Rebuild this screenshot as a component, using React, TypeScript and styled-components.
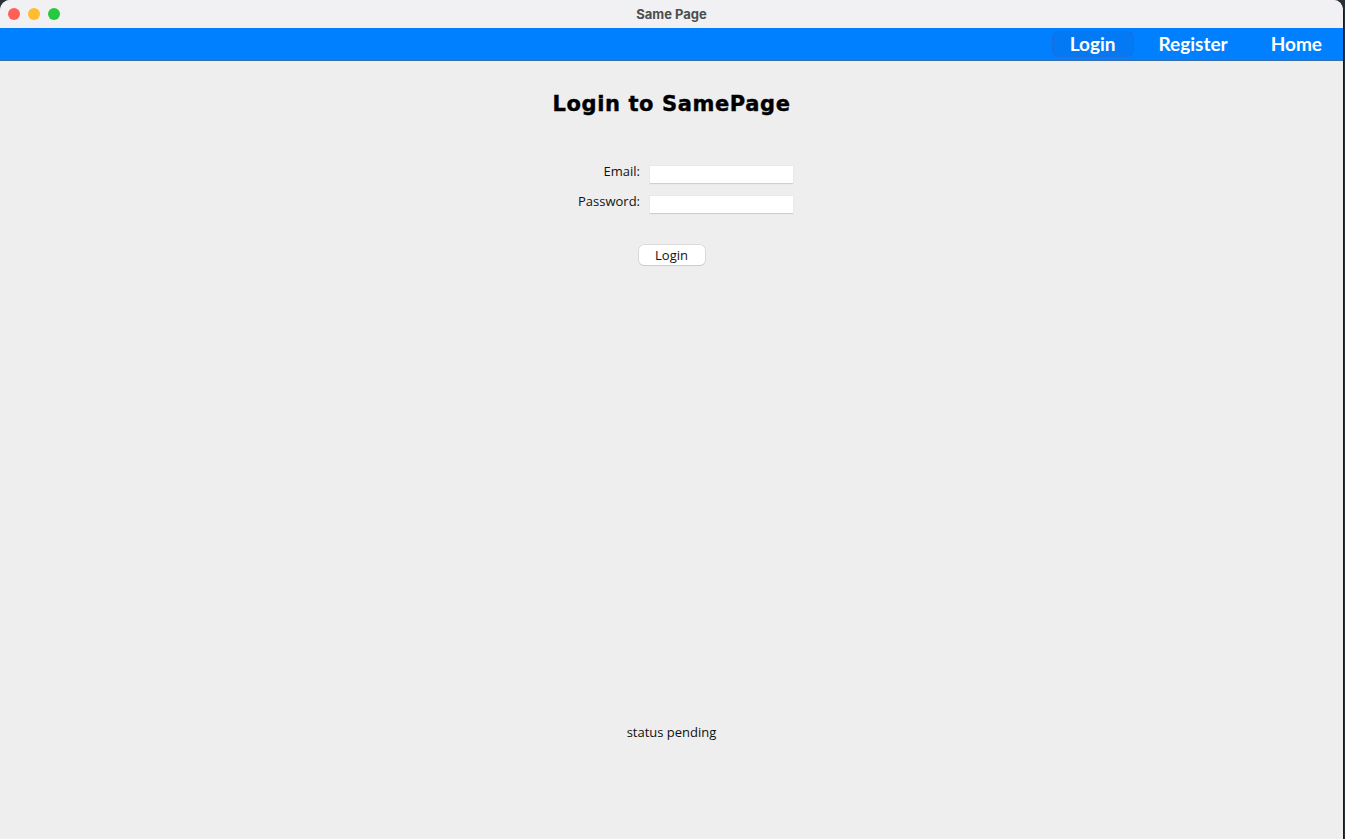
import React from "react";
import styled, { createGlobalStyle } from "styled-components";

const Global = createGlobalStyle`
  html, body { margin: 0; padding: 0; width: 1345px; height: 839px; overflow: hidden; background: #2a3038; }
  #root { width: 1345px; height: 839px; }
  * { box-sizing: border-box; }
`;

const Window = styled.div`
  width: 1344px;
  height: 839px;
  border-radius: 10px 10px 0 0;
  overflow: hidden;
  display: flex;
  flex-direction: column;
  background: #eeeeee;
  border-right: 1px solid #1a1a1a;
`;

const TitleBar = styled.div`
  height: 28px;
  flex: none;
  position: relative;
  background: #f1f1f3;
  display: flex;
  align-items: center;
  justify-content: center;
  font-family: "Inter", "Liberation Sans", sans-serif;
  font-weight: 700;
  font-size: 13px;
  color: #4d4d4f;
`;

const Lights = styled.div`
  position: absolute;
  left: 8px;
  top: 8px;
  display: flex;
  gap: 8px;
`;

const Light = styled.span<{ $c: string }>`
  width: 12px;
  height: 12px;
  border-radius: 50%;
  background: ${(p) => p.$c};
`;

const NavBar = styled.div`
  height: 33px;
  flex: none;
  background: #007fff;
  border-bottom: 1px solid #3a6ea8;
  display: flex;
  justify-content: flex-end;
  align-items: center;
  padding-right: 3px;
`;

const NavItem = styled.div<{ $active?: boolean }>`
  font-family: "Lato", "Liberation Sans", sans-serif;
  font-weight: 700;
  font-size: 19px;
  color: #ffffff;
  height: 26px;
  display: flex;
  align-items: center;
  padding: 0 17px 1px 17px;
  margin-left: ${(p) => (p.$active ? "0" : "7px")};
  border-radius: 7px;
  background: ${(p) => (p.$active ? "#0479f4" : "transparent")};
  border: 1px solid ${(p) => (p.$active ? "#1a6fdc" : "transparent")};
`;

const Content = styled.div`
  flex: 1;
  display: flex;
  flex-direction: column;
  align-items: center;
`;

const Heading = styled.h1`
  margin: 28px 0 0 0;
  font-family: "DejaVu Sans", sans-serif;
  font-weight: 700;
  font-size: 21px;
  letter-spacing: 0.6px;
  color: #000;
  line-height: 30px;
  -webkit-text-stroke: 0.4px #000;
`;

const Form = styled.div`
  margin-top: 47px;
  display: grid;
  grid-template-columns: auto 143px;
  column-gap: 10px;
  row-gap: 12px;
  align-items: center;
  margin-left: 28px;
`;

const Label = styled.label`
  font-family: "Open Sans", "DejaVu Sans", sans-serif;
  font-size: 13px;
  color: #111;
  text-align: right;
  margin-top: -9px;
`;

const Input = styled.div`
  height: 18px;
  background: #fff;
  border-bottom: 1px solid #cfcfcf;
  box-shadow: 0 0 0 0.5px #e4e4e4;
`;

const Button = styled.button`
  margin-top: 31px;
  width: 66px;
  height: 20px;
  border-radius: 5px;
  border: none;
  background: #fff;
  box-shadow: 0 0 0 0.5px #c8c8c8, 0 1px 1px rgba(0, 0, 0, 0.12);
  font-family: "Open Sans", "DejaVu Sans", sans-serif;
  font-size: 13px;
  color: #111;
  padding: 0;
  line-height: 18px;
`;

const Status = styled.div`
  margin-top: auto;
  margin-bottom: 98px;
  font-family: "Open Sans", "DejaVu Sans", sans-serif;
  font-size: 13px;
  color: #111;
`;

export default function App() {
  return (
    <>
      <Global />
      <Window>
        <TitleBar>
          <Lights>
            <Light $c="#fe5f57" />
            <Light $c="#febc2e" />
            <Light $c="#28c840" />
          </Lights>
          Same Page
        </TitleBar>
        <NavBar>
          <NavItem $active>Login</NavItem>
          <NavItem>Register</NavItem>
          <NavItem>Home</NavItem>
        </NavBar>
        <Content>
          <Heading>Login to SamePage</Heading>
          <Form>
            <Label>Email:</Label>
            <Input />
            <Label>Password:</Label>
            <Input />
          </Form>
          <Button>Login</Button>
          <Status>status pending</Status>
        </Content>
      </Window>
    </>
  );
}
